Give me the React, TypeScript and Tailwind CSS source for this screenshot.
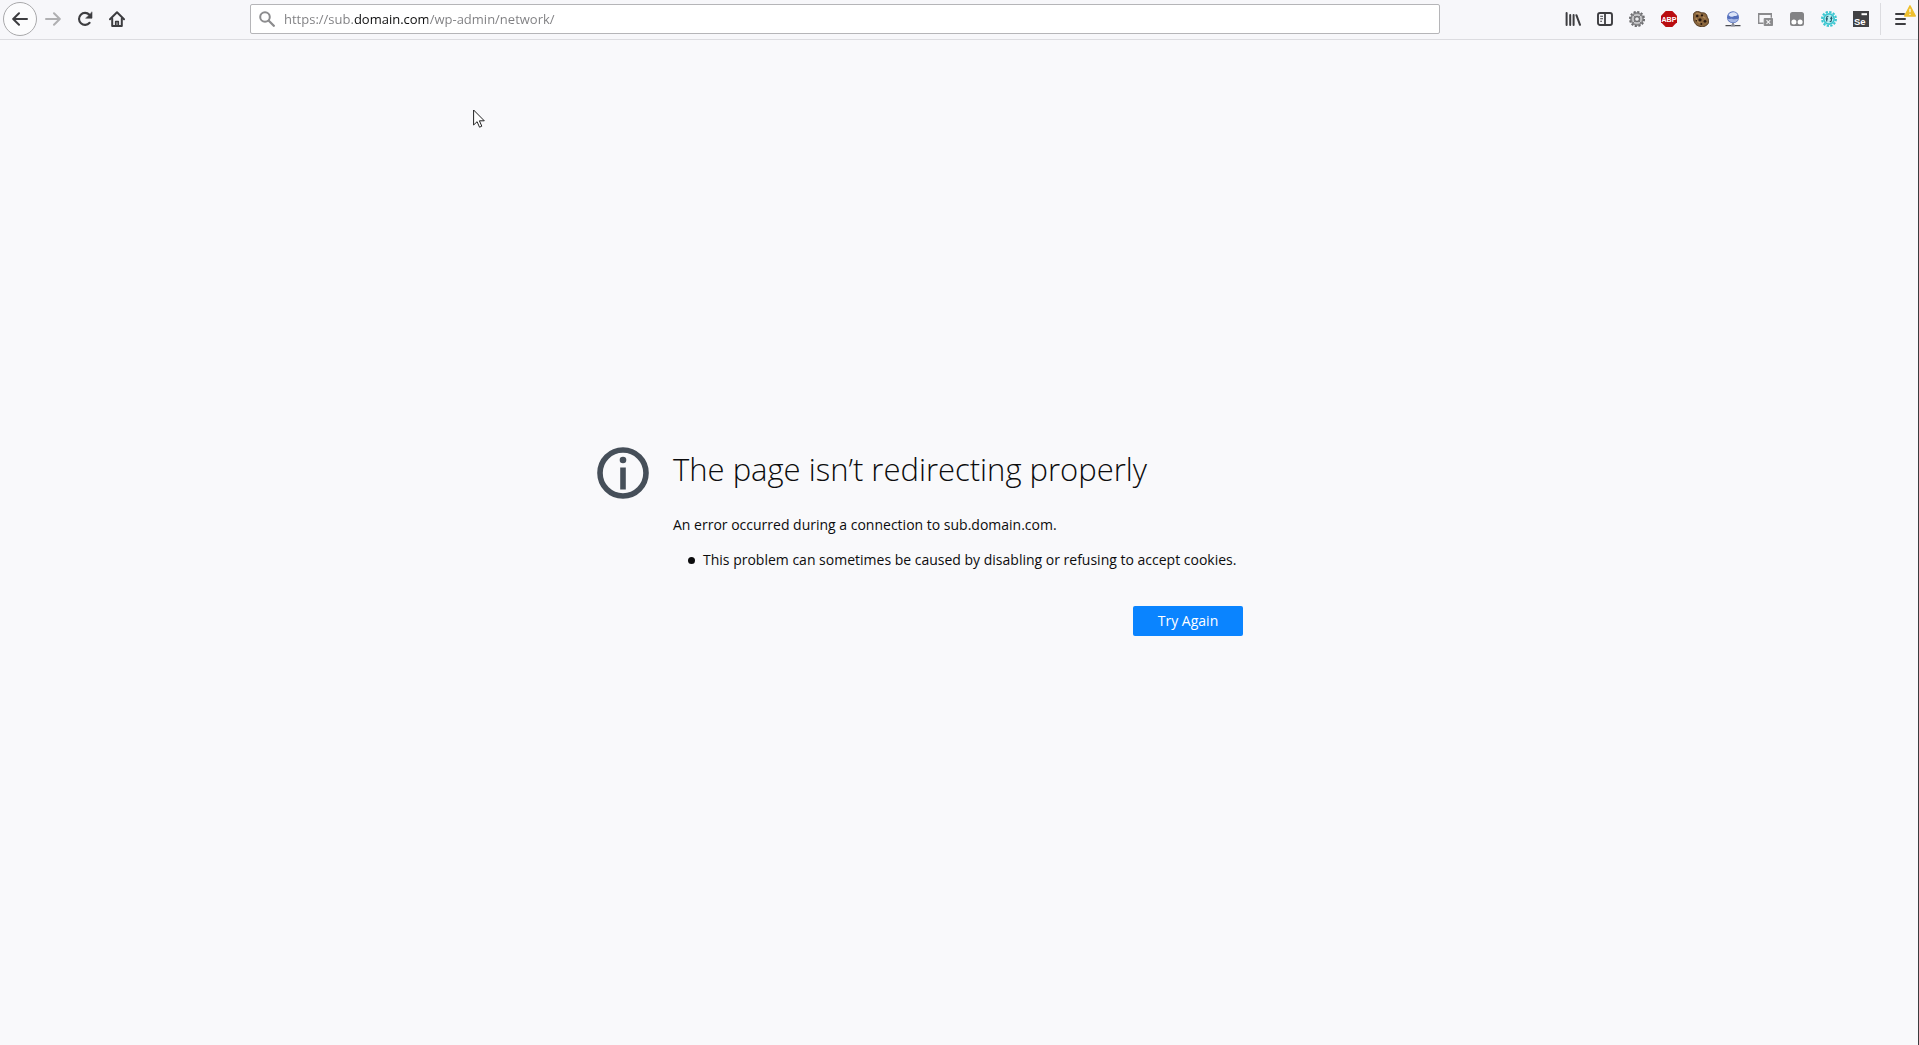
import type { ReactNode } from "react";

function ToolButton({ label, children }: { label: string; children: ReactNode }) {
  return (
    <button
      type="button"
      aria-label={label}
      title={label}
      className="flex size-8 shrink-0 items-center justify-center rounded-sm text-[#3d3d40] hover:bg-black/10"
    >
      {children}
    </button>
  );
}

function BackIcon() {
  return (
    <svg viewBox="0 0 16 16" className="size-4" fill="none" stroke="currentColor" strokeWidth="2" strokeLinecap="round" strokeLinejoin="round">
      <path d="M15 8H1.5M7 2.2 1.2 8 7 13.8" />
    </svg>
  );
}

function ForwardIcon() {
  return (
    <svg viewBox="0 0 16 16" className="size-4 text-[#b0b0b2]" fill="none" stroke="currentColor" strokeWidth="2" strokeLinecap="round" strokeLinejoin="round">
      <path d="M1 8h13.5M9 2.2 14.8 8 9 13.8" />
    </svg>
  );
}

function ReloadIcon() {
  return (
    <svg viewBox="0 0 16 16" className="size-4" fill="none" stroke="currentColor" strokeWidth="2.1" strokeLinecap="round">
      <path d="M12.6 11.8A6 6 0 1 1 12.4 3.8" />
      <path d="M15 1.2v6H9z" fill="currentColor" stroke="currentColor" strokeWidth="0.6" strokeLinejoin="round" />
    </svg>
  );
}

function HomeIcon() {
  return (
    <svg viewBox="0 0 16 16" className="size-4" fill="none" stroke="currentColor" strokeWidth="2" strokeLinecap="round" strokeLinejoin="round">
      <path d="M1 8.2 8 1.3l7 6.9" />
      <path d="M3.2 7.5V15h9.6V7.5" />
      <path d="M6.6 15v-4.5h2.8V15" strokeWidth="1.4" />
      <path d="M8 11v4" strokeWidth="1" />
    </svg>
  );
}

function LibraryIcon() {
  return (
    <svg viewBox="0 0 16 16" className="size-4" fill="none" stroke="currentColor" strokeWidth="2" strokeLinecap="round">
      <path d="M1.600 2v12M5.200 4v10M8.600 4v10M11.400 4.200l3.600 9.600" />
    </svg>
  );
}

function SidebarIcon() {
  return (
    <svg viewBox="0 0 16 16" className="size-4" fill="none" stroke="currentColor">
      <rect x="1" y="2" width="14" height="12" rx="2" strokeWidth="1.9" />
      <path d="M8 2v12" strokeWidth="1.8" />
      <path d="M3.2 5.2h2.8M3.2 7.7h2.8M3.2 10.2h1.8" strokeWidth="1.1" />
    </svg>
  );
}

function CogIcon() {
  return (
    <svg viewBox="0 0 16 16" className="size-4">
      <circle cx="8" cy="8" r="7.1" fill="none" stroke="#6c6c6f" strokeWidth="1.9" strokeDasharray="2.2 1.517" />
      <circle cx="8" cy="8" r="6.200" fill="#a2a2a4" stroke="#6c6c6f" strokeWidth="1" />
      <circle cx="8" cy="8" r="4.200" fill="none" stroke="#cfcfd1" strokeWidth="1.300" />
      <path d="m3.800 3.800 2.200 2.200m4 4 2.200 2.200m0-8.400L10 6m-4 4-2.200 2.200" stroke="#7c7c7f" strokeWidth="1" />
      <circle cx="8" cy="8" r="2.400" fill="#ececee" stroke="#68686b" strokeWidth="1.100" />
    </svg>
  );
}

function AdblockIcon() {
  return (
    <svg viewBox="0 0 16 16" className="size-4">
      <path d="M4.700 0h6.600L16 4.700v6.600L11.300 16H4.700L0 11.300V4.700z" fill="#b90d10" />
      <text x="8" y="10.600" textAnchor="middle" fontFamily="Liberation Sans, sans-serif" fontWeight="700" fontSize="7.200" fill="#fff">
        ABP
      </text>
    </svg>
  );
}

function CookieIcon() {
  return (
    <svg viewBox="0 0 16 16" className="size-4">
      <path
        d="M3 .8c2-.8 4 .3 5.200.9 1.500.2 2.800-.2 4.300.9 1.500 1.100 1.300 2.500 2 3.900.8 1.500 1.500 2.600 1.100 4.700-.4 2.300-2 2.900-3.400 3.800-1.600 1-3.600.8-5.400.4-2-.5-3.500-1.200-4.600-3C1.200 10.800.4 9.200.5 7.200.6 5.600 0 4.800.5 3.200.8 2 1.700 1.200 3 .8z"
        fill="#8b673e"
        stroke="#4a321b"
        strokeWidth="0.9"
      />
      <path d="M3 2.500c2-1 3 .8 4.500.8M3 7c.5 2.500 2 4 4 5M9.500 5.500l3 2" fill="none" stroke="#b18a5a" strokeWidth="1.200" />
      <g fill="#2b1a10">
        <circle cx="4.200" cy="5" r="1.300" />
        <circle cx="9" cy="4.400" r="1.100" />
        <circle cx="7" cy="8.800" r="1.600" />
        <circle cx="12" cy="10.300" r="1.400" />
        <circle cx="8.300" cy="13" r="1" />
        <circle cx="3.300" cy="9.800" r=".8" />
      </g>
    </svg>
  );
}

function GlobeIcon() {
  return (
    <svg viewBox="0 0 16 16" className="size-4">
      <circle cx="8" cy="6.200" r="6" fill="#5570bd" />
      <path d="M3.400 4C4.500 1.800 6.700.9 9 1.200c1.800.3 3 1.400 3.700 2.800-1.500 1.300-3.300.8-4.500 1.400-1.500.8-3.400.3-4.800-1.400z" fill="#dbe4f8" />
      <path d="M2.800 7.700c1.700 1 2.900-.5 4.700.4 1.500.7 3.400-.8 5.600.1-.7 2.200-2.900 3.300-5 3.300-2.300 0-4.500-1.300-5.300-3.800z" fill="#a6b7e3" />
      <path d="M8 12v2M.5 14.600h15" stroke="#4c4d53" strokeWidth="1.200" />
      <path d="M6 13.600h4v1.800H6z" fill="#878a96" />
    </svg>
  );
}

function WindowCloseIcon() {
  return (
    <svg viewBox="0 0 16 16" className="size-4" fill="none" stroke="#8b8b8d">
      <path d="M6.500 12.200H1.700V2.800h12.600v4" strokeWidth="1.400" />
      <path d="M1 3h14" strokeWidth="2" />
      <path d="M7.200 7.500h8.300v7H7.200z" fill="#8b8b8d" strokeWidth="1" />
      <path d="m9.500 9.200 3.700 3.700m0-3.700-3.700 3.700" stroke="#f3f3f5" strokeWidth="1.200" />
    </svg>
  );
}

function TamperIcon() {
  return (
    <svg viewBox="0 0 16 16" className="size-4">
      <path d="M3.500 1h9A2.500 2.500 0 0 1 15 3.500v9a2.500 2.500 0 0 1-2.500 2.500h-9A2.500 2.500 0 0 1 1 12.500v-9A2.500 2.500 0 0 1 3.500 1z" fill="#838385" />
      <circle cx="4.900" cy="10.900" r="2.500" fill="#fff" />
      <circle cx="11.100" cy="10.900" r="2.500" fill="#fff" />
    </svg>
  );
}

function TealGearIcon() {
  return (
    <svg viewBox="0 0 16 16" className="size-4">
      <circle cx="8" cy="8" r="7" fill="none" stroke="#3ac6d0" strokeWidth="2" strokeDasharray="2.300 1.365" />
      <circle cx="8" cy="8" r="5.200" fill="#baeef1" stroke="#3ac6d0" strokeWidth="1.700" />
      <path d="M7.400 5.300c-1.500-.3-1.700.5-1.700 1.700v3.500M4.700 7.900h2.200M8.700 10.500c1.500.3 1.700-.7 1.700-1.900V5.400M9.200 7.300h2.200" fill="none" stroke="#1c5f72" strokeWidth="1.200" />
    </svg>
  );
}

function SeleniumIcon() {
  return (
    <svg viewBox="0 0 16 16" className="size-4">
      <path d="M0 0h16v16H0z" fill="#414144" />
      <path d="M8.500 3.200H14" stroke="#fff" strokeWidth="2" />
      <text x="1" y="14" fontFamily="Liberation Sans, sans-serif" fontWeight="700" fontSize="9.500" fill="#fff">
        Se
      </text>
    </svg>
  );
}

function MenuIcon() {
  return (
    <svg viewBox="0 0 16 16" className="size-4" fill="none" stroke="currentColor" strokeWidth="2" strokeLinecap="round">
      <path d="M4 3h8M4 8h9M4 13h9" />
    </svg>
  );
}

const extensions = [
  { label: "Library", icon: <LibraryIcon /> },
  { label: "Sidebars", icon: <SidebarIcon /> },
  { label: "Settings", icon: <CogIcon /> },
  { label: "Adblock Plus", icon: <AdblockIcon /> },
  { label: "Cookie manager", icon: <CookieIcon /> },
  { label: "Proxy", icon: <GlobeIcon /> },
  { label: "Window resizer", icon: <WindowCloseIcon /> },
  { label: "Tampermonkey", icon: <TamperIcon /> },
  { label: "Developer tools", icon: <TealGearIcon /> },
  { label: "Selenium IDE", icon: <SeleniumIcon /> },
];

function Toolbar() {
  return (
    <header className="flex h-10 items-center border-b border-[#dcdce0] bg-[#f7f7fa] pb-px pl-[3px]">
      <nav aria-label="Navigation" className="flex items-center">
        <button
          type="button"
          aria-label="Back"
          className="flex size-[34px] shrink-0 items-center justify-center rounded-full border border-[#a9a9ab] bg-[#fcfcfd] text-[#3d3d40]"
        >
          <BackIcon />
        </button>
        <ToolButton label="Forward"><ForwardIcon /></ToolButton>
        <ToolButton label="Reload"><ReloadIcon /></ToolButton>
        <ToolButton label="Home"><HomeIcon /></ToolButton>
      </nav>
      <form className="mx-[117px] flex h-[30px] min-w-0 flex-1 items-center rounded-xs border border-[#b5b5b8] bg-white pl-2">
        <svg viewBox="0 0 16 16" className="size-4 shrink-0" fill="none" stroke="#8c8c8e" strokeWidth="2" strokeLinecap="round" aria-hidden="true">
          <circle cx="6" cy="6" r="4.800" />
          <path d="m9.800 9.800 5 5" strokeWidth="2.300" />
        </svg>
        <input
          type="text"
          aria-label="Address"
          spellCheck={false}
          defaultValue="https://sub.domain.com/wp-admin/network/"
          className="ml-[9px] min-w-0 flex-1 bg-[linear-gradient(to_right,#7d7d80_70px,#0c0c0d_70px,#0c0c0d_144px,#7d7d80_144px)] bg-clip-text text-[13px] leading-5 text-transparent caret-black outline-none"
        />
      </form>
      <div className="flex items-center">
        {extensions.map(({ label, icon }) => (
          <ToolButton key={label} label={label}>{icon}</ToolButton>
        ))}
      </div>
      <div className="ml-[3px] h-8 border-l border-[#dcdce0]" />
      <div className="relative flex w-[37px] justify-center">
        <ToolButton label="Open menu"><MenuIcon /></ToolButton>
        <svg viewBox="0 0 12 12" className="absolute top-0.5 right-0.5 size-3" aria-hidden="true">
          <path d="M6 .8 11.300 11H.7z" fill="#eebf2c" stroke="#eebf2c" strokeWidth="1.400" strokeLinejoin="round" />
          <path d="M6 3.800v3.500M6 8.800v1.200" stroke="#fff" strokeWidth="1.200" />
        </svg>
      </div>
    </header>
  );
}

function ErrorPage() {
  return (
    <main className="flex flex-1 flex-col justify-center pb-0.5">
      <div className="flex items-start justify-center gap-6 pr-[78px]">
        <svg viewBox="0 0 52 52" className="size-[52px] shrink-0" aria-hidden="true">
          <circle cx="26" cy="26" r="23" fill="none" stroke="#464f59" strokeWidth="5.600" />
          <circle cx="26" cy="13" r="3.300" fill="#464f59" />
          <path d="M23.200 20.500h5.600v22h-5.600z" fill="#464f59" />
        </svg>
        <section className="w-[570px]">
          <h1 className="text-[31px] leading-[44px] font-light">The page isn’t redirecting properly</h1>
          <p className="mt-6 text-sm">An error occurred during a connection to sub.domain.com.</p>
          <ul className="mt-[15px] pl-[15px] text-sm whitespace-nowrap">
            <li className="flex items-center gap-2 before:size-[7px] before:rounded-full before:bg-current">
              This problem can sometimes be caused by disabling or refusing to accept cookies.
            </li>
          </ul>
          <div className="mt-9 flex justify-end">
            <button type="button" className="h-[30px] w-[110px] rounded-xs bg-[#0a84ff] text-sm text-white hover:bg-[#0060df]">
              Try Again
            </button>
          </div>
        </section>
      </div>
    </main>
  );
}

function Pointer() {
  return (
    <svg viewBox="0 0 12 19" className="pointer-events-none absolute top-[109px] left-[473px] h-[19px] w-3" aria-hidden="true">
      <path d="M.6 1v15l3.500-3.300 2.400 5.500 2.300-1-2.400-5.400h4.900z" fill="#fff" stroke="#222" strokeWidth="1" />
    </svg>
  );
}

export default function App() {
  return (
    <div className="relative flex min-h-screen flex-col border-r border-[#3c3c3e] bg-[#f9f9fb] font-['Open_Sans','Noto_Sans',sans-serif] text-[#0c0c0d]">
      <Toolbar />
      <ErrorPage />
      <Pointer />
    </div>
  );
}
